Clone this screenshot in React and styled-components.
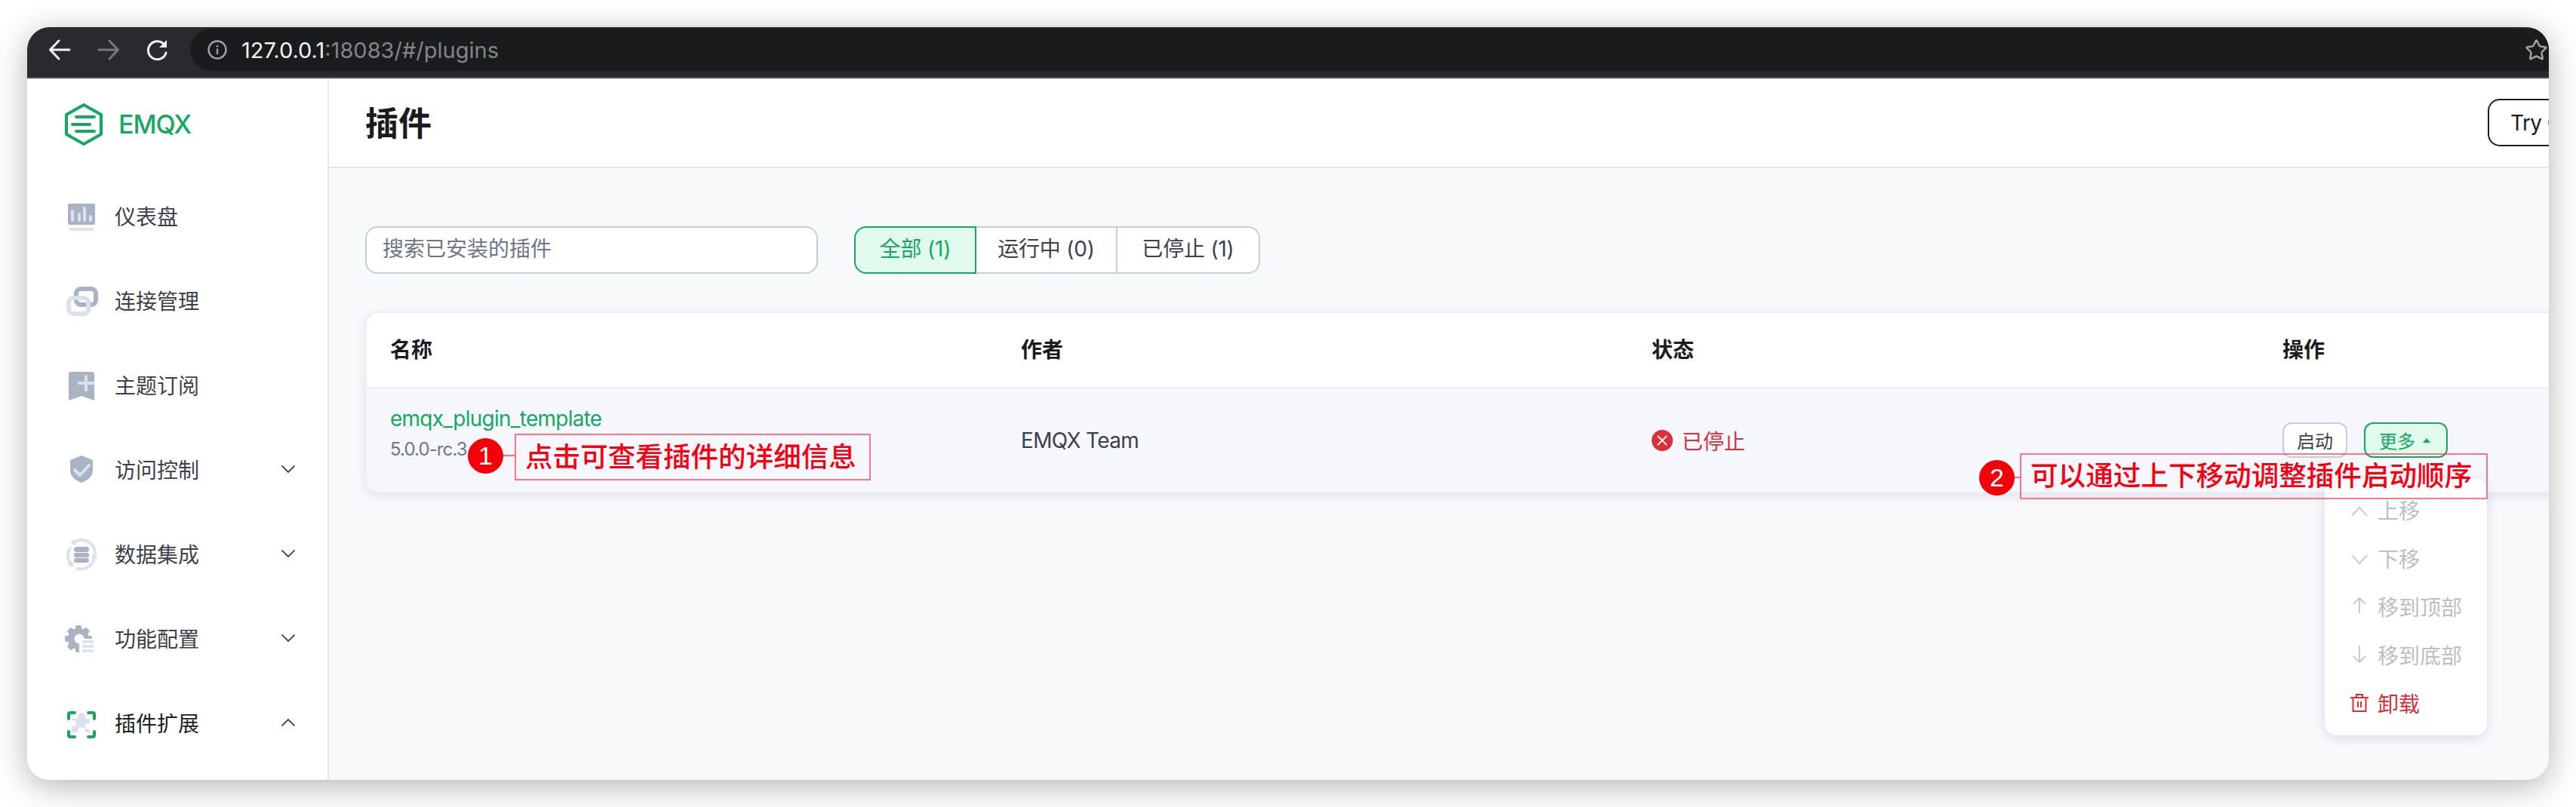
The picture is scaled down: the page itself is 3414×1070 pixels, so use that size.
import React from 'react';
import styled, { createGlobalStyle } from 'styled-components';
import { Star } from 'lucide-react';

const GREEN = '#16a860';
const SLATE = '#a9b3c3';
const MIST = '#dce1f0';
const INK = '#3d3f4e';
const DIM = '#b9bec9';
const DANGER = '#dc2f3a';

const Global = createGlobalStyle`
  html, body { margin: 0; padding: 0; background: #fff; overflow: hidden; }
  body { font-family: Inter, "Noto Sans CJK SC", sans-serif; }
  * { box-sizing: border-box; }
`;

const Page = styled.div`
  width: 3414px; height: 1070px; padding: 36px;
`;
const Window = styled.div`
  position: relative; width: 3342px; height: 998px; display: flex; flex-direction: column;
  overflow: hidden; border-radius: 30px; background: #f8f9fb;
`;
const Frame = styled.div`
  width: 3342px; height: 998px; border-radius: 30px;
  box-shadow: 0 8px 44px rgba(0, 0, 0, .3);
`;
const BrowserBar = styled.div`
  height: 68px; flex-shrink: 0; background: #292a2e; border-bottom: 2px solid #4b4b50;
  display: flex; align-items: flex-start; padding: 2px 0 0 28px;
`;
const NavButtons = styled.div`
  display: flex; gap: 35px; height: 56px; align-items: center; flex-shrink: 0;
`;
const BarIcon = styled.svg`
  width: 30px; height: 30px; display: block; fill: none;
  stroke: ${p => p.$dim ? '#77787c' : '#f1f1f1'}; stroke-width: 3; stroke-linecap: round; stroke-linejoin: round;
`;
const Address = styled.div`
  flex: 1; height: 56px; margin-left: 28px; background: #1a1b1d; border-radius: 28px 0 0 28px;
  display: flex; align-items: center; padding: 0 1px 0 23px; gap: 19px;
`;
const Url = styled.div`
  font-size: 29px; color: #83858a; white-space: nowrap; margin-right: auto; font-weight: 400;
  b { color: #f4f4f4; font-weight: 400; }
`;
const Body = styled.div`
  flex: 1; display: flex; min-height: 0;
`;
const Sidebar = styled.aside`
  width: 400px; flex-shrink: 0; background: #fff; border-right: 2px solid #e3e5f0;
`;
const Brand = styled.div`
  height: 126px; display: flex; align-items: flex-start; padding: 33px 0 0 50px; gap: 21px;
`;
const BrandName = styled.div`
  color: ${GREEN}; font-size: 34px; font-weight: 500; line-height: 56px; letter-spacing: -1px;
`;
const NavItem = styled.div`
  height: 112px; display: flex; align-items: center; padding: 0 43px 0 48px; gap: 20px;
  color: ${p => p.$active ? '#1d1d22' : INK}; font-size: 28px;
`;
const NavIcon = styled.svg`
  width: 48px; height: 48px; flex-shrink: 0; display: block;
`;
const Chevron = styled.svg`
  width: 18px; height: 10px; margin-left: auto; fill: none; stroke: ${INK}; stroke-width: 1.8;
`;
const Main = styled.main`
  flex: 1; min-width: 0; overflow: hidden;
`;
const Header = styled.header`
  height: 119px; background: #fff; border-bottom: 2px solid #e3e5f0; display: flex; align-items: center;
`;
const Title = styled.h1`
  width: 2861px; flex-shrink: 0; margin: 0 0 3px; padding-left: 48px; font-size: 44px; font-weight: 700; color: #1b1b1f;
`;
const TryButton = styled.button`
  flex-shrink: 0; width: 220px; height: 63px; border: 2px solid #1b1b1f; border-radius: 16px; background: #fff;
  font: 400 28px Inter, sans-serif; letter-spacing: -.6px; color: #1b1b1f; text-align: left; padding: 0 0 0 28px; white-space: nowrap;
`;
const Content = styled.div`
  padding: 77px 0 0 48px;
`;
const Toolbar = styled.div`
  display: flex; gap: 48px; height: 63px;
`;
const Search = styled.div`
  width: 600px; height: 63px; background: #fff; border: 2px solid #c9cddb; border-radius: 16px;
  color: #6f7685; font-size: 28px; line-height: 57px; padding-left: 21px;
`;
const Tabs = styled.div`
  display: flex; height: 63px;
`;
const Tab = styled.div`
  width: ${p => p.$w}px; text-align: center; height: 63px; line-height: 57px; font-size: 28px; letter-spacing: -.2px;
  margin-left: ${p => p.$first ? 0 : -2}px;
  border: 2px solid ${p => p.$active ? GREEN : '#c9cddb'};
  background: ${p => p.$active ? '#e1faee' : '#fff'}; color: ${p => p.$active ? GREEN : INK};
  position: relative; z-index: ${p => p.$active ? 1 : 0};
  border-radius: ${p => p.$first ? '16px 0 0 16px' : p.$last ? '0 16px 16px 0' : '0'};
  white-space: nowrap;
`;
const Card = styled.section`
  margin-top: 50px; width: 3346px; background: #fff; border: 2px solid #ecedf7; border-radius: 18px;
  box-shadow: 0 4px 14px rgba(90, 100, 160, .14); overflow: hidden;
`;
const Columns = styled.div`
  display: grid; grid-template-columns: repeat(4, 836px); padding-left: 31px; align-items: center;
`;
const HeadRow = styled(Columns)`
  height: 100px; padding-bottom: 4px; border-bottom: 2px solid #ecedf7; font-size: 28px; font-weight: 700; color: #1b1b1f;
`;
const DataRow = styled(Columns)`
  height: 137px; background: #f5f7fd; font-size: 28px; color: ${INK};
`;
const NameCell = styled.div`
  align-self: start; padding-top: 20px;
`;
const PluginName = styled.div`
  color: ${GREEN}; font-size: 28px; line-height: 40px; letter-spacing: -.75px;
`;
const Version = styled.div`
  color: #6f7685; font-size: 24px; line-height: 42px; letter-spacing: -.9px;
`;
const Author = styled.div`
  letter-spacing: -.7px;
`;
const Status = styled.div`
  display: flex; align-items: center; gap: 12px; color: ${DANGER}; font-size: 28px;
`;
const Actions = styled.div`
  display: flex; gap: 22px;
`;
const SmallButton = styled.div`
  height: 47px; border-radius: 12px; font-size: 24px; display: flex; align-items: center;
  border: 2px solid ${p => p.$accent ? GREEN : '#c9cddb'};
  background: ${p => p.$accent ? '#e1faee' : '#fff'}; color: ${p => p.$accent ? GREEN : INK};
  padding: ${p => p.$accent ? '0 21px 0 18px' : '0 17px'}; gap: 10px;
`;
const Caret = styled.span`
  width: 0; height: 0; border: 5.5px solid transparent; border-top: 0; border-bottom: 6px solid ${GREEN};
`;
const Dropdown = styled.div`
  position: absolute; left: 3045px; top: 598px; width: 215px; height: 341px; padding-top: 10px;
  background: #fff; border-radius: 16px; box-shadow: 0 4px 16px rgba(90, 100, 160, .18);
`;
const MenuItem = styled.div`
  height: 64px; display: flex; align-items: center; padding-left: 34px; gap: 12px; font-size: 28px;
  color: ${p => p.$danger ? DANGER : DIM};
`;
const MenuIcon = styled.svg`
  width: 24px; height: 24px; flex-shrink: 0; fill: none; stroke: currentColor; stroke-width: ${p => p.$w || 1.6};
`;
const Note = styled.div`
  position: absolute; left: ${p => p.$x}px; top: ${p => p.$y}px; display: flex; align-items: center;
`;
const Pin = styled.div`
  display: flex; align-items: center; flex-shrink: 0; margin-top: ${p => p.$dy}px;
`;
const Badge = styled.div`
  width: 47px; height: 47px; border-radius: 50%; background: #f50008; color: #fff;
  font-family: "Liberation Sans", sans-serif; font-size: 34px; line-height: 47px; text-align: center;
`;
const Connector = styled.div`
  width: ${p => p.$w}px; height: 2px; background: #ff6d7c;
`;
const NoteBox = styled.div`
  height: ${p => p.$h}px; width: ${p => p.$w}px; border: 2px solid rgba(255, 40, 65, .62);
  color: #f80010; font-size: 36.6px; font-weight: 500; padding-left: ${p => p.$pad}px; white-space: nowrap;
  display: flex; align-items: center; line-height: 1;
`;

const DashboardIcon = () => (
  <NavIcon viewBox="0 0 48 48">
    <rect x="6" y="8" width="36" height="28" rx="2" fill={SLATE} />
    {[[10, 16], [19, 20], [26, 12], [34, 23]].map(([x, y]) => (
      <rect key={x} x={x} y={y} width="4" height={32 - y} rx="2" fill={MIST} />
    ))}
    <rect x="8" y="40" width="32" height="4" rx="2" fill={MIST} />
  </NavIcon>
);
const ConnectionIcon = () => (
  <NavIcon viewBox="0 0 48 48" fill="none">
    <rect x="17" y="9" width="26" height="21" rx="6" stroke={SLATE} strokeWidth="6" />
    <rect x="7" y="21" width="26" height="21" rx="6" stroke={MIST} strokeWidth="6" />
  </NavIcon>
);
const TopicIcon = () => (
  <NavIcon viewBox="0 0 48 48">
    <path d="M10 7h28a3 3 0 0 1 3 3v35l-17-6-17 6V10a3 3 0 0 1 3-3z" fill={SLATE} />
    <path d="M21 22h18M30 13v18" stroke={MIST} strokeWidth="4" strokeLinecap="round" />
  </NavIcon>
);
const ShieldIcon = () => (
  <NavIcon viewBox="0 0 48 48">
    <path d="M24 6l15 6v13c0 9-7 14-15 17-8-3-15-8-15-17V12z" fill={SLATE} />
    <path d="M15 25l7 7 12-13" fill="none" stroke={MIST} strokeWidth="4" strokeLinecap="round" strokeLinejoin="round" />
  </NavIcon>
);
const DataIcon = () => (
  <NavIcon viewBox="0 0 48 48">
    <g fill="none" stroke={MIST} strokeWidth="4" strokeLinecap="round">
      <path d="M14 9A18 18 0 0 1 42 23" />
      <path d="M40 33A18 18 0 0 1 19 44" />
      <path d="M10 38A18 18 0 0 1 9 17" />
    </g>
    <circle cx="14" cy="9" r="3.5" fill={MIST} />
    <circle cx="41" cy="28" r="3.5" fill={MIST} />
    <circle cx="10" cy="38" r="3.5" fill={MIST} />
    <rect x="14" y="15" width="20" height="7" rx="3.5" fill={SLATE} />
    <rect x="14" y="23" width="20" height="6" rx="3" fill={SLATE} />
    <rect x="14" y="30" width="20" height="6" rx="3" fill={SLATE} />
  </NavIcon>
);
const GearIcon = () => (
  <NavIcon viewBox="0 0 48 48">
    {[0, 45, 90, 135, 180, 225, 270, 315].map(a => (
      <rect key={a} x="16" y="7" width="8" height="10" rx="2" fill={SLATE} transform={`rotate(${a} 20 25)`} />
    ))}
    <circle cx="20" cy="25" r="14" fill={SLATE} />
    <circle cx="21" cy="25" r="6.5" fill="#fff" />
    <rect x="21" y="25" width="21" height="20" fill="#fff" />
    <path d="M25 29h15M25 35h15M25 41h15" stroke={MIST} strokeWidth="3.4" />
  </NavIcon>
);
const PluginIcon = () => (
  <NavIcon viewBox="0 0 48 48">
    <path d="M7 19v-6a2 2 0 0 1 2-2h6M33 11h6a2 2 0 0 1 2 2v6M41 36v5a2 2 0 0 1-2 2h-6M15 43H9a2 2 0 0 1-2-2v-5" fill="none" stroke={GREEN} strokeWidth="4" strokeLinecap="round" />
    <path d="M19 19v-3a5 5 0 0 1 10 0v3h6v6h-2a4 4 0 0 0 0 8h2v4H29v-2a5 5 0 0 0-10 0v2h-8v-8h2a4 4 0 0 0 0-8h-2v-2z" fill={MIST} />
  </NavIcon>
);

const navItems = [
  { label: '仪表盘', Icon: DashboardIcon },
  { label: '连接管理', Icon: ConnectionIcon },
  { label: '主题订阅', Icon: TopicIcon },
  { label: '访问控制', Icon: ShieldIcon, arrow: 'down' },
  { label: '数据集成', Icon: DataIcon, arrow: 'down' },
  { label: '功能配置', Icon: GearIcon, arrow: 'down' },
  { label: '插件扩展', Icon: PluginIcon, arrow: 'up', active: true },
];

const menu = [
  { label: '上移', d: 'M2 20L12 9l10 11' },
  { label: '下移', d: 'M2 8l10 11L22 8' },
  { label: '移到顶部', d: 'M12 21V1M4 9l8-8 8 8' },
  { label: '移到底部', d: 'M12 0v22M4 14l8 8 8-8' },
];

export default function App() {
  return (
    <Page>
      <Global />
      <Frame>
        <Window>
          <BrowserBar>
            <NavButtons>
              <BarIcon viewBox="0 0 30 30"><path d="M28 15H3M14 3L2.5 15 14 27" /></BarIcon>
              <BarIcon viewBox="0 0 30 30" $dim><path d="M2 15h25M16 3l11.500 12L16 27" /></BarIcon>
              <BarIcon viewBox="0 0 30 30">
                <path d="M25 10a12 12 0 1 0 1 9" />
                <path d="M27 2v10H17z" fill="#f1f1f1" stroke="none" />
              </BarIcon>
            </NavButtons>
            <Address>
              <svg width="26" height="26" viewBox="0 0 26 26" fill="none" stroke="#9aa0a6" strokeWidth="2.4">
                <circle cx="13" cy="13" r="11.500" />
                <path d="M13 11.500v7.500M13 7v2.500" />
              </svg>
              <Url><b>127.0.0.1</b>:18083/#/plugins</Url>
              <Star size={31} color="#a0a0a2" strokeWidth={2} />
            </Address>
          </BrowserBar>
          <Body>
            <Sidebar>
              <Brand>
                <svg width="50" height="56" viewBox="0 0 50 56" fill="none" stroke={GREEN} strokeWidth="4" strokeLinecap="round" strokeLinejoin="round">
                  <path d="M25 2l23 13v26L25 54 2 41V15z" />
                  <path d="M15 18h24M10 28h23M15 37h24" />
                </svg>
                <BrandName>EMQX</BrandName>
              </Brand>
              {navItems.map(({ label, Icon, arrow, active }) => (
                <NavItem key={label} $active={active}>
                  <Icon />
                  {label}
                  {arrow && (
                    <Chevron viewBox="0 0 18 10">
                      <path d={arrow === 'up' ? 'M.5 9.500L9 1l8.500 8.500' : 'M.5.5L9 9l8.500-8.500'} />
                    </Chevron>
                  )}
                </NavItem>
              ))}
            </Sidebar>
            <Main>
              <Header>
                <Title>插件</Title>
                <TryButton>Try Cloud</TryButton>
              </Header>
              <Content>
                <Toolbar>
                  <Search>搜索已安装的插件</Search>
                  <Tabs>
                    <Tab $first $active $w={162}>全部 (1)</Tab>
                    <Tab $w={189}>运行中 (0)</Tab>
                    <Tab $last $w={191}>已停止 (1)</Tab>
                  </Tabs>
                </Toolbar>
                <Card>
                  <HeadRow>
                    <div>名称</div>
                    <div>作者</div>
                    <div>状态</div>
                    <div>操作</div>
                  </HeadRow>
                  <DataRow>
                    <NameCell>
                      <PluginName>emqx_plugin_template</PluginName>
                      <Version>5.0.0-rc.3</Version>
                    </NameCell>
                    <Author>EMQX Team</Author>
                    <Status>
                      <svg width="28" height="28" viewBox="0 0 28 28">
                        <circle cx="14" cy="14" r="14" fill={DANGER} />
                        <path d="M8 8l12 12M20 8L8 20" stroke="#fff" strokeWidth="1.8" />
                      </svg>
                      已停止
                    </Status>
                    <Actions>
                      <SmallButton>启动</SmallButton>
                      <SmallButton $accent>更多<Caret /></SmallButton>
                    </Actions>
                  </DataRow>
                </Card>
              </Content>
            </Main>
          </Body>
          <Dropdown>
            {menu.map(({ label, d }) => (
              <MenuItem key={label}>
                <MenuIcon viewBox="0 0 24 24"><path d={d} /></MenuIcon>
                {label}
              </MenuItem>
            ))}
            <MenuItem $danger>
              <MenuIcon viewBox="0 0 24 24" $w={2}>
                <path d="M0 5h24M8 5V1h8v4M3.500 5v18h17V5M10 10v8M14 10v8" />
              </MenuIcon>
              卸载
            </MenuItem>
          </Dropdown>
          <Note $x={584} $y={539}>
            <Pin $dy={-4}><Badge>1</Badge><Connector $w={15} /></Pin>
            <NoteBox $w={472} $h={62} $pad={12}>点击可查看插件的详细信息</NoteBox>
          </Note>
          <Note $x={2587} $y={565}>
            <Pin $dy={3}><Badge>2</Badge><Connector $w={7} /></Pin>
            <NoteBox $w={620} $h={61} $pad={12}>可以通过上下移动调整插件启动顺序</NoteBox>
          </Note>
        </Window>
      </Frame>
    </Page>
  );
}
